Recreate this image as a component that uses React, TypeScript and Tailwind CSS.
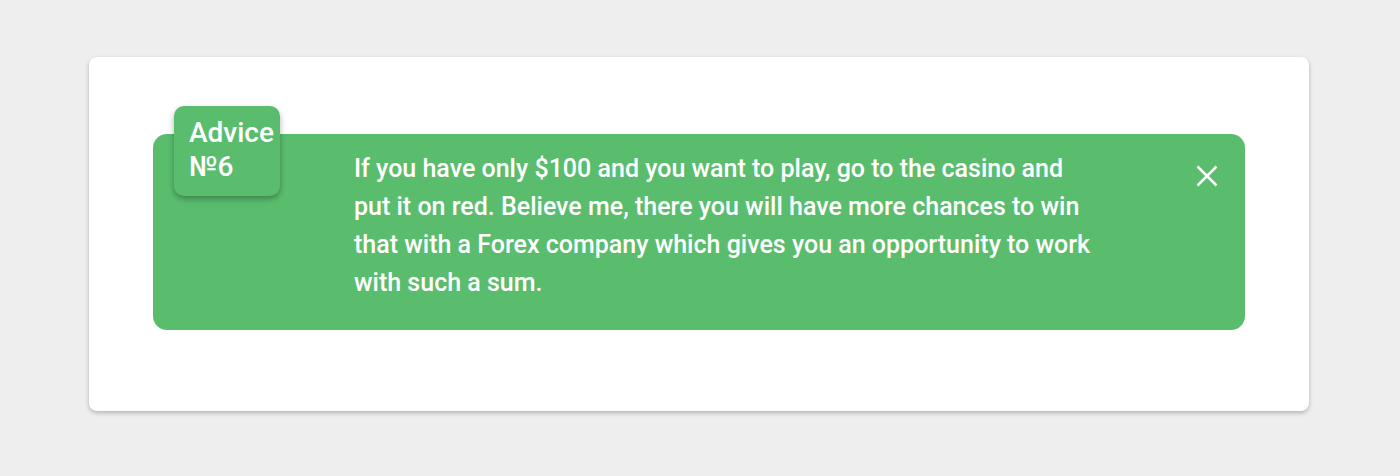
const ADVICE_TEXT =
  'If you have only $100 and you want to play, go to the casino and put it on red. Believe me, there you will have more chances to win that with a Forex company which gives you an opportunity to work with such a sum.';

function AdviceBadge({ number }: { number: number }) {
  return (
    <div className="absolute -top-[28px] left-[21px] w-[106px] h-[90px] rounded-[10px] bg-[#5abd6e] pl-[15px] pt-[10px] shadow-[0_3px_6px_rgba(0,0,0,0.3)]">
      <p className="text-[28px] leading-[34px] font-medium text-white whitespace-nowrap">
        Advice
        <br />№{number}
      </p>
    </div>
  );
}

export default function App() {
  return (
    <div
      className="min-h-[476px] bg-[#eeeeee] pt-[57px] pl-[89px]"
      style={{ fontFamily: 'Roboto, "Liberation Sans", sans-serif' }}
    >
      <div className="w-[1220px] bg-white rounded-[8px] px-16 pt-[77px] pb-[81px] shadow-[0_2px_4px_rgba(0,0,0,0.25)]">
        <div className="relative flex items-start bg-[#5abd6e] rounded-[14px] h-[196px] pl-[201px] pt-4 pr-[26px]">
          <AdviceBadge number={6} />
          <p className="w-[742px] text-[25px] leading-[38px] font-medium text-white">
            {ADVICE_TEXT}
          </p>
          <button className="ml-auto mt-[14px] text-white">
            <svg width="24" height="24" viewBox="0 0 24 24" fill="none" stroke="currentColor" strokeWidth="2.5">
              <path d="M2.5 2.5 L21.5 21.5 M21.5 2.5 L2.5 21.5" />
            </svg>
          </button>
        </div>
      </div>
    </div>
  );
}
